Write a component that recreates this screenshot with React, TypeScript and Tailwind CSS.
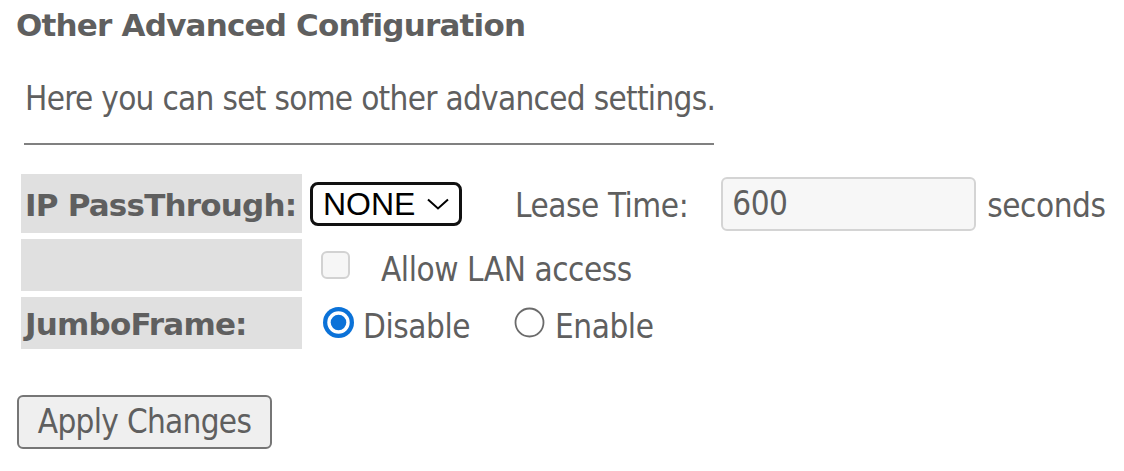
import React from 'react'

function Radio({ checked }: { checked?: boolean }) {
  return (
    <svg width="31" height="31" viewBox="0 0 31 31" className="shrink-0">
      {checked ? (
        <>
          <circle cx="15.5" cy="15.5" r="15.5" fill="#0b72d8" />
          <circle cx="15.5" cy="15.5" r="11.2" fill="#fff" />
          <circle cx="15.5" cy="15.5" r="7.8" fill="#0b72d8" />
        </>
      ) : (
        <circle cx="15.5" cy="15.5" r="14" fill="#fff" stroke="#6b6b6b" strokeWidth="1.8" />
      )}
    </svg>
  )
}

export default function App() {
  return (
    <div className="w-[1124px] h-[471px] bg-white pl-[16px] text-[#5f5f5f] font-['DejaVu_Sans_Condensed','DejaVu_Sans',sans-serif] text-[33px] tracking-[-0.7px]">
      <h1 className="h-[50px] leading-[50px] text-[31px] font-bold tracking-[-0.8px] font-['DejaVu_Sans',sans-serif]">Other Advanced Configuration</h1>

      <p className="ml-[9px] mt-[29px] leading-[40px]">Here you can set some other advanced settings.</p>
      <div className="ml-[8px] mt-[24px] w-[690px] h-[2px] bg-[#808080]" />

      <div className="ml-[5px] mt-[29px] grid grid-cols-[281px_auto] gap-x-[6px] gap-y-[6px] leading-[40px] tracking-[-0.45px]">
        <div className="bg-[#e0e0e0] h-[59px] flex items-center pl-[4px] pt-[2px] text-[31px] font-bold tracking-[-0.8px] font-['DejaVu_Sans',sans-serif]">IP PassThrough:</div>
        <div className="flex items-center">
          <div className="ml-[2px] h-[44px] w-[152px] border-[3px] border-[#111] rounded-[8px] flex items-center pl-[10px] text-black font-['Liberation_Sans',Arial,sans-serif] text-[32px] tracking-normal">
            <span className="pt-[1px]">NONE</span>
            <svg width="24" height="14" viewBox="0 0 24 14" className="ml-[11px]">
              <path d="M2 2.5 L12 11.5 L22 2.5" fill="none" stroke="#000" strokeWidth="2" />
            </svg>
          </div>
          <span className="ml-[53px] pt-[5px]">Lease Time:</span>
          <div className="ml-[33px] w-[255px] h-[54px] bg-[#f7f7f7] border-2 border-[#d4d4d4] rounded-[6px] flex items-center pl-[9px] pt-[1px]">600</div>
          <span className="ml-[11px] pt-[5px]">seconds</span>
        </div>

        <div className="bg-[#e0e0e0] h-[52px]" />
        <div className="flex items-center">
          <div className="ml-[13px] w-[29px] h-[28px] bg-[#f6f6f6] border-2 border-[#d2d2d2] rounded-[6px] shrink-0" />
          <span className="ml-[31px] pt-[9px]">Allow LAN access</span>
        </div>

        <div className="bg-[#e0e0e0] h-[52px] flex items-center pl-[4px] pt-[2px] text-[31px] font-bold tracking-[-0.8px] font-['DejaVu_Sans',sans-serif]">JumboFrame:</div>
        <div className="flex items-center">
          <div className="ml-[15px] mt-[-1px]"><Radio checked /></div>
          <span className="ml-[9px] pt-[8px]">Disable</span>
          <div className="ml-[44px] mt-[-1px]"><Radio /></div>
          <span className="ml-[10px] pt-[8px]">Enable</span>
        </div>
      </div>

      <button className="mt-[46px] ml-[1px] h-[54px] w-[255px] bg-[#efefef] border-2 border-[#767676] rounded-[6px] leading-[40px] text-[#5f5f5f]">Apply Changes</button>
    </div>
  )
}
